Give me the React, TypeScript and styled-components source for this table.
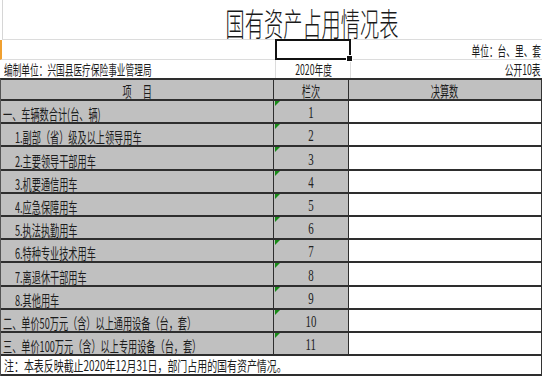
import React from 'react';
import styled, { createGlobalStyle } from 'styled-components';

const GlobalStyle = createGlobalStyle`
  html, body { margin: 0; padding: 0; background: #fff; }
  body { font-family: "Noto Sans CJK SC", "Noto Sans", sans-serif; color: #1c1c1c; }
`;

const Sheet = styled.div`
  width: 542px;
  height: 378px;
  overflow: hidden;
  background: #fff;
`;

const TitleRow = styled.div`
  height: 40px;
  box-sizing: border-box;
  margin-left: 2px;
  border-left: 1px solid #d6d6d6;
  border-bottom: 1px solid #dcdcdc;
  display: flex;
  justify-content: center;
  padding-left: 80px;
`;

const Squeeze = styled.span<{ $s: number; $origin?: string }>`
  display: inline-block;
  white-space: nowrap;
  transform: scaleX(${(p) => p.$s});
  transform-origin: ${(p) => p.$origin ?? 'left'} bottom;
`;

const TitleText = styled(Squeeze)`
  font-size: 32px;
  font-weight: 300;
  line-height: 1;
  padding-top: 6px;
  color: #1a1a1a;
`;

const InfoRow = styled.div<{ $h: number; $line?: boolean }>`
  height: ${(p) => p.$h}px;
  box-sizing: border-box;
  display: grid;
  grid-template-columns: 274px 75px 1fr;
  border-bottom: ${(p) => (p.$line ? '1px solid #dcdcdc' : 'none')};
  font-size: 14px;
  line-height: 1;
  border-left: 2px solid ${(p) => (p.$line ? '#f0a030' : 'transparent')};
`;

const InfoCell = styled.div<{ $align?: string; $grid?: boolean }>`
  display: flex;
  align-items: flex-end;
  justify-content: ${(p) => p.$align ?? 'flex-start'};
  padding: 0 1px 2px 2px;
  box-sizing: border-box;
  border-right: ${(p) => (p.$grid ? '1px solid #dcdcdc' : 'none')};
  overflow: visible;
  min-width: 0;
`;

const SelectedCell = styled.div`
  position: relative;
  margin: -1px 0 -1px -1px;
  border: 2px solid #111;
  box-sizing: border-box;
  &::after {
    content: '';
    position: absolute;
    right: -4px;
    bottom: -4px;
    width: 5px;
    height: 5px;
    background: #111;
    border: 1px solid #fff;
  }
`;

const Table = styled.div`
  border-top: 2px solid #2e2e2e;
  border-left: 1px solid #555;
  border-right: 1px solid #333;
  width: 542px;
  box-sizing: border-box;
`;

const Row = styled.div<{ $h: number; $head?: boolean }>`
  height: ${(p) => p.$h}px;
  box-sizing: border-box;
  display: grid;
  grid-template-columns: 273px 75px 1fr;
  border-bottom: 2px solid #2e2e2e;
  background: ${(p) => (p.$head ? '#c0c0c0' : '#fff')};
  font-size: 15px;
  line-height: 1;
`;

const Cell = styled.div<{ $bg?: string; $align?: string; $indent?: number; $mark?: boolean }>`
  position: relative;
  background: ${(p) => p.$bg ?? 'transparent'};
  border-right: 1px solid #2e2e2e;
  display: flex;
  align-items: flex-end;
  justify-content: ${(p) => p.$align ?? 'flex-start'};
  padding: 0 0 1px ${(p) => p.$indent ?? 0}px;
  box-sizing: border-box;
  min-width: 0;
  &:last-child { border-right: none; }
  ${(p) =>
    p.$mark
      ? `&::before {
    content: '';
    position: absolute;
    left: 1px;
    top: 0;
    width: 0;
    height: 0;
    border-top: 5px solid #178a17;
    border-right: 5px solid transparent;
  }`
      : ''}
`;

const Num = styled(Squeeze)`
  font-family: "Liberation Serif", "DejaVu Serif", serif;
  font-size: 16px;
  color: #222;
`;

const NoteRow = styled.div`
  height: 20px;
  box-sizing: border-box;
  border-bottom: 2px solid #2e2e2e;
  display: flex;
  align-items: flex-end;
  padding: 0 0 2px 3px;
  font-size: 14px;
  line-height: 1;
  background: #fff;
`;

type Item = { label: string; level: 0 | 1 };

const items: Item[] = [
  { label: '一、车辆数合计(台、辆)', level: 0 },
  { label: '1.副部（省）级及以上领导用车', level: 1 },
  { label: '2.主要领导干部用车', level: 1 },
  { label: '3.机要通信用车', level: 1 },
  { label: '4.应急保障用车', level: 1 },
  { label: '5.执法执勤用车', level: 1 },
  { label: '6.特种专业技术用车', level: 1 },
  { label: '7.离退休干部用车', level: 1 },
  { label: '8.其他用车', level: 1 },
  { label: '二、单价50万元（含）以上通用设备（台，套）', level: 0 },
  { label: '三、单价100万元（含）以上专用设备（台，套）', level: 0 },
];

const S = 0.61;

export default function App() {
  return (
    <>
      <GlobalStyle />
      <Sheet>
        <TitleRow>
          <TitleText $s={0.6} $origin="center">国有资产占用情况表</TitleText>
        </TitleRow>
        <InfoRow $h={20} $line>
          <InfoCell />
          <SelectedCell />
          <InfoCell $align="flex-end">
            <Squeeze $s={0.62} $origin="right">单位：台、里、套</Squeeze>
          </InfoCell>
        </InfoRow>
        <InfoRow $h={18}>
          <InfoCell $grid>
            <Squeeze $s={0.62}>编制单位：兴国县医疗保险事业管理局</Squeeze>
          </InfoCell>
          <InfoCell $align="center" $grid>
            <Squeeze $s={0.62} $origin="center">2020年度</Squeeze>
          </InfoCell>
          <InfoCell $align="flex-end">
            <Squeeze $s={0.62} $origin="right">公开10表</Squeeze>
          </InfoCell>
        </InfoRow>
        <Table>
          <Row $h={21} $head>
            <Cell $align="center">
              <Squeeze $s={S} $origin="center">项　 目</Squeeze>
            </Cell>
            <Cell $align="center">
              <Squeeze $s={S} $origin="center">栏次</Squeeze>
            </Cell>
            <Cell $align="center">
              <Squeeze $s={S} $origin="center">决算数</Squeeze>
            </Cell>
          </Row>
          {items.map((it, i) => (
            <Row key={i} $h={23.2}>
              <Cell $bg="#c0c0c0" $indent={it.level === 1 ? 14 : 2}>
                <Squeeze $s={S}>{it.label}</Squeeze>
              </Cell>
              <Cell $bg="#c0c0c0" $align="center" $mark>
                <Num $s={0.68} $origin="center">{i + 1}</Num>
              </Cell>
              <Cell />
            </Row>
          ))}
          <NoteRow>
            <Squeeze $s={0.71}>注：本表反映截止2020年12月31日，部门占用的国有资产情况。</Squeeze>
          </NoteRow>
        </Table>
      </Sheet>
    </>
  );
}
